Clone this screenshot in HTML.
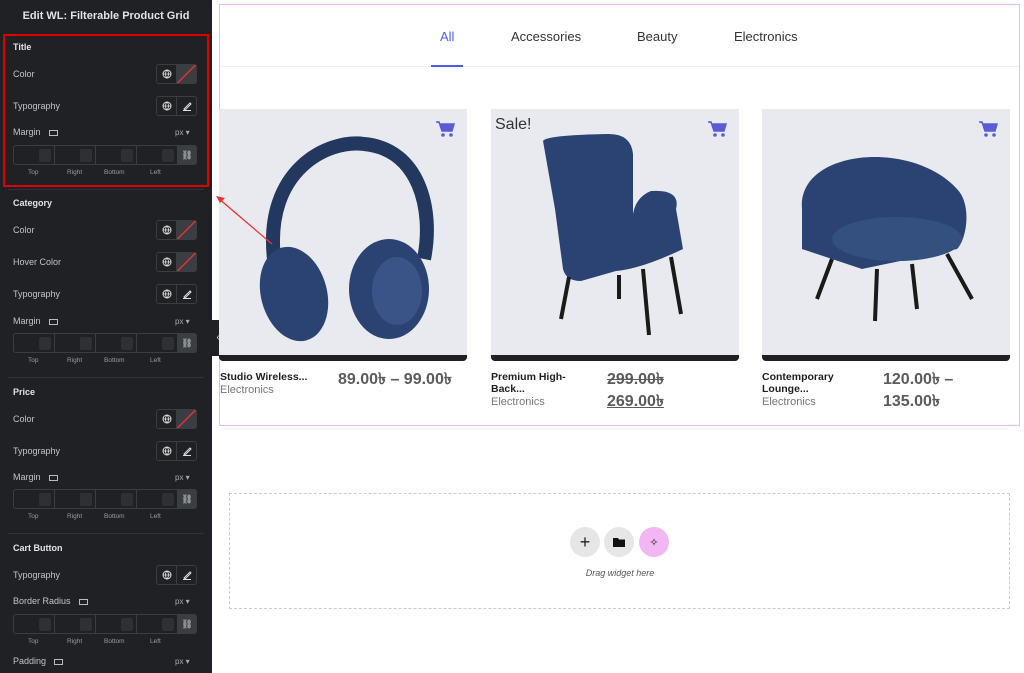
<!DOCTYPE html>
<html><head><meta charset="utf-8"><style>
*{box-sizing:border-box;margin:0;padding:0}
body{width:1024px;height:673px;overflow:hidden;background:#fff;font-family:"Liberation Sans",sans-serif;position:relative}
#sb{position:absolute;left:0;top:0;width:212px;height:673px;background:#1f2124;color:#c7c9cc;font-size:9px}
.a{position:absolute}
.h{font-weight:bold;color:#e2e3e5;font-size:9px}
.l{color:#c2c4c7;font-size:9px}
.bg{position:absolute;left:156px;width:41px;height:20px;border:1px solid #3a3d42;border-radius:3px;display:flex}
.bg div{flex:1;display:flex;align-items:center;justify-content:center}
.bg div+div{border-left:1px solid #3a3d42}
.red{background:#3a3d42;background-image:linear-gradient(135deg,transparent 46%,#d33 48%,#d33 52%,transparent 54%)}
.px{position:absolute;left:175px;font-size:8px;color:#aaa}
.inp{position:absolute;left:13px;width:184px;height:20px;border:1px solid #3a3d42;border-radius:3px;display:flex}
.inp .c{width:41px;border-right:1px solid #3a3d42;position:relative}
.inp .c:after{content:"";position:absolute;right:3px;top:3px;width:12px;height:13px;background:#2e3034;border-radius:2px}
.inp .k{flex:1;background:#3a3d42;display:flex;align-items:center;justify-content:center;color:#ddd;font-size:9px}
.lb{position:absolute;font-size:6.5px;color:#9a9ca0}
.div{position:absolute;left:8px;width:196px;height:1px;background:#313336}
.mon{display:inline-block;width:9px;height:6px;border:1.5px solid #bbb;margin-left:8px;vertical-align:middle;position:relative}
.tab{position:absolute;top:29px;font-size:13px;color:#333}
.card{position:absolute;top:109px;width:248px;height:252px}
.img{position:absolute;left:0;top:0;width:248px;height:248px;background:#e8eaef}
.bar{position:absolute;left:0;top:246px;width:248px;height:6px;background:#1f2024;border-radius:0 0 4px 4px}
.t{position:absolute;font-size:10.5px;font-weight:bold;color:#1f1f1f;line-height:12px}
.cat{position:absolute;font-size:11px;color:#777}
.pr{position:absolute;font-size:16px;font-weight:bold;color:#5a5a5f;line-height:22px}
.cart{position:absolute;right:12px;top:11px}
.circ{position:absolute;top:527px;width:30px;height:30px;border-radius:50%;background:#e6e6e6;display:flex;align-items:center;justify-content:center}
</style></head><body>
<div id="sb">
<div class="a h" style="left:0;width:212px;text-align:center;top:10px;font-size:11px">Edit WL: Filterable Product Grid</div>
<div class="a" style="left:3px;top:34px;width:206px;height:153px;border:2px solid #d00"></div>

<div class="a h" style="left:13px;top:42px">Title</div>
<div class="a l" style="left:13px;top:69px">Color</div><div class="bg" style="top:64px"><div><svg width="10" height="10" viewBox="0 0 10 10"><circle cx="5" cy="5" r="4" fill="none" stroke="#ddd"/><path d="M1 5h8M5 1c-2 2-2 6 0 8M5 1c2 2 2 6 0 8" stroke="#ddd" fill="none" stroke-width=".8"/></svg></div><div class="red"></div></div>
<div class="a l" style="left:13px;top:101px">Typography</div><div class="bg" style="top:96px"><div><svg width="10" height="10" viewBox="0 0 10 10"><circle cx="5" cy="5" r="4" fill="none" stroke="#ddd"/><path d="M1 5h8M5 1c-2 2-2 6 0 8M5 1c2 2 2 6 0 8" stroke="#ddd" fill="none" stroke-width=".8"/></svg></div><div><svg width="10" height="10"><path d="M2 8l6-6 1 1-6 6zM1 9.5h8" stroke="#ddd" fill="none"/></svg></div></div>
<div class="a l" style="left:13px;top:127px">Margin<span class="mon"></span></div><div class="px" style="top:128px">px ▾</div>
<div class="inp" style="top:145px"><div class="c"></div><div class="c"></div><div class="c"></div><div class="c"></div><div class="k">⛓</div></div>
<div class="lb" style="left:28px;top:169px">Top</div><div class="lb" style="left:67px;top:169px">Right</div><div class="lb" style="left:104px;top:169px">Bottom</div><div class="lb" style="left:150px;top:169px">Left</div>
<div class="div" style="top:189px"></div>

<div class="a h" style="left:13px;top:198px">Category</div>
<div class="a l" style="left:13px;top:225px">Color</div><div class="bg" style="top:220px"><div><svg width="10" height="10" viewBox="0 0 10 10"><circle cx="5" cy="5" r="4" fill="none" stroke="#ddd"/><path d="M1 5h8M5 1c-2 2-2 6 0 8M5 1c2 2 2 6 0 8" stroke="#ddd" fill="none" stroke-width=".8"/></svg></div><div class="red"></div></div>
<div class="a l" style="left:13px;top:257px">Hover Color</div><div class="bg" style="top:252px"><div><svg width="10" height="10" viewBox="0 0 10 10"><circle cx="5" cy="5" r="4" fill="none" stroke="#ddd"/><path d="M1 5h8M5 1c-2 2-2 6 0 8M5 1c2 2 2 6 0 8" stroke="#ddd" fill="none" stroke-width=".8"/></svg></div><div class="red"></div></div>
<div class="a l" style="left:13px;top:289px">Typography</div><div class="bg" style="top:284px"><div><svg width="10" height="10" viewBox="0 0 10 10"><circle cx="5" cy="5" r="4" fill="none" stroke="#ddd"/><path d="M1 5h8M5 1c-2 2-2 6 0 8M5 1c2 2 2 6 0 8" stroke="#ddd" fill="none" stroke-width=".8"/></svg></div><div><svg width="10" height="10"><path d="M2 8l6-6 1 1-6 6zM1 9.5h8" stroke="#ddd" fill="none"/></svg></div></div>
<div class="a l" style="left:13px;top:316px">Margin<span class="mon"></span></div><div class="px" style="top:317px">px ▾</div>
<div class="inp" style="top:333px"><div class="c"></div><div class="c"></div><div class="c"></div><div class="c"></div><div class="k">⛓</div></div>
<div class="lb" style="left:28px;top:357px">Top</div><div class="lb" style="left:67px;top:357px">Right</div><div class="lb" style="left:104px;top:357px">Bottom</div><div class="lb" style="left:150px;top:357px">Left</div>
<div class="div" style="top:377px"></div>

<div class="a h" style="left:13px;top:387px">Price</div>
<div class="a l" style="left:13px;top:414px">Color</div><div class="bg" style="top:409px"><div><svg width="10" height="10" viewBox="0 0 10 10"><circle cx="5" cy="5" r="4" fill="none" stroke="#ddd"/><path d="M1 5h8M5 1c-2 2-2 6 0 8M5 1c2 2 2 6 0 8" stroke="#ddd" fill="none" stroke-width=".8"/></svg></div><div class="red"></div></div>
<div class="a l" style="left:13px;top:446px">Typography</div><div class="bg" style="top:441px"><div><svg width="10" height="10" viewBox="0 0 10 10"><circle cx="5" cy="5" r="4" fill="none" stroke="#ddd"/><path d="M1 5h8M5 1c-2 2-2 6 0 8M5 1c2 2 2 6 0 8" stroke="#ddd" fill="none" stroke-width=".8"/></svg></div><div><svg width="10" height="10"><path d="M2 8l6-6 1 1-6 6zM1 9.5h8" stroke="#ddd" fill="none"/></svg></div></div>
<div class="a l" style="left:13px;top:472px">Margin<span class="mon"></span></div><div class="px" style="top:473px">px ▾</div>
<div class="inp" style="top:489px"><div class="c"></div><div class="c"></div><div class="c"></div><div class="c"></div><div class="k">⛓</div></div>
<div class="lb" style="left:28px;top:513px">Top</div><div class="lb" style="left:67px;top:513px">Right</div><div class="lb" style="left:104px;top:513px">Bottom</div><div class="lb" style="left:150px;top:513px">Left</div>
<div class="div" style="top:533px"></div>

<div class="a h" style="left:13px;top:543px">Cart Button</div>
<div class="a l" style="left:13px;top:570px">Typography</div><div class="bg" style="top:565px"><div><svg width="10" height="10" viewBox="0 0 10 10"><circle cx="5" cy="5" r="4" fill="none" stroke="#ddd"/><path d="M1 5h8M5 1c-2 2-2 6 0 8M5 1c2 2 2 6 0 8" stroke="#ddd" fill="none" stroke-width=".8"/></svg></div><div><svg width="10" height="10"><path d="M2 8l6-6 1 1-6 6zM1 9.5h8" stroke="#ddd" fill="none"/></svg></div></div>
<div class="a l" style="left:13px;top:596px">Border Radius<span class="mon"></span></div><div class="px" style="top:597px">px ▾</div>
<div class="inp" style="top:614px"><div class="c"></div><div class="c"></div><div class="c"></div><div class="c"></div><div class="k">⛓</div></div>
<div class="lb" style="left:28px;top:638px">Top</div><div class="lb" style="left:67px;top:638px">Right</div><div class="lb" style="left:104px;top:638px">Bottom</div><div class="lb" style="left:150px;top:638px">Left</div>
<div class="a l" style="left:13px;top:656px">Padding<span class="mon"></span></div><div class="px" style="top:657px">px ▾</div>
</div>
<div class="a" style="left:212px;top:320px;width:12px;height:36px;background:#1f2124;border-radius:0 3px 3px 0;color:#ddd;font-size:10px;line-height:36px;text-align:center">‹</div>

<div class="a" style="left:219px;top:4px;width:801px;height:422px;border:1px solid #f0b8f0"></div>
<div class="a" style="left:220px;top:66px;width:799px;height:1px;background:#eee"></div>
<div class="tab" style="left:440px;color:#4a5ee8">All</div>
<div class="a" style="left:431px;top:65px;width:32px;height:2px;background:#4a5ee8"></div>
<div class="tab" style="left:511px">Accessories</div>
<div class="tab" style="left:637px">Beauty</div>
<div class="tab" style="left:734px">Electronics</div>

<div class="card" style="left:219px"><div class="img">
<svg width="248" height="248" viewBox="0 0 248 248"><path d="M55 150C45 60 110 30 145 35C200 40 215 100 205 150" stroke="#22385f" stroke-width="14" fill="none"/><ellipse cx="75" cy="185" rx="33" ry="48" fill="#2b4372" transform="rotate(-15 75 185)"/><ellipse cx="170" cy="180" rx="40" ry="50" fill="#2b4372"/><ellipse cx="178" cy="182" rx="25" ry="34" fill="#3a5488"/></svg>
<svg class="cart" width="20" height="18" viewBox="0 0 20 18"><path d="M1 2h3l3 9h10l2-7H5" fill="#5b5bd6" stroke="#5b5bd6" stroke-width="1.5"/><circle cx="8" cy="15" r="1.8" fill="#5b5bd6"/><circle cx="16" cy="15" r="1.8" fill="#5b5bd6"/></svg>
</div><div class="bar"></div></div>

<div class="card" style="left:491px"><div class="img">
<div class="a" style="left:4px;top:7px;font-size:16px;color:#333">Sale!</div>
<svg width="248" height="248" viewBox="0 0 248 248"><path d="M52 32Q55 26 118 25Q140 25 142 45L142 105Q145 88 160 82Q190 80 185 100L192 140Q150 160 125 162L90 172Q75 172 72 160L64 100Z" fill="#2b4372"/><path d="M78 168L70 210M152 160L158 226M180 148L190 205M128 166L128 190" stroke="#1a1a1a" stroke-width="4"/></svg>
<svg class="cart" width="20" height="18" viewBox="0 0 20 18"><path d="M1 2h3l3 9h10l2-7H5" fill="#5b5bd6" stroke="#5b5bd6" stroke-width="1.5"/><circle cx="8" cy="15" r="1.8" fill="#5b5bd6"/><circle cx="16" cy="15" r="1.8" fill="#5b5bd6"/></svg>
</div><div class="bar"></div></div>

<div class="card" style="left:762px"><div class="img">
<svg width="248" height="248" viewBox="0 0 248 248"><path d="M40 100C35 40 150 30 195 80C210 95 205 130 195 140L100 160L40 140Z" fill="#2b4372"/><ellipse cx="135" cy="130" rx="65" ry="22" fill="#33507f"/><path d="M70 150L55 190M185 145L210 190M115 160L113 212M150 155L155 200" stroke="#1a1a1a" stroke-width="4"/></svg>
<svg class="cart" width="20" height="18" viewBox="0 0 20 18"><path d="M1 2h3l3 9h10l2-7H5" fill="#5b5bd6" stroke="#5b5bd6" stroke-width="1.5"/><circle cx="8" cy="15" r="1.8" fill="#5b5bd6"/><circle cx="16" cy="15" r="1.8" fill="#5b5bd6"/></svg>
</div><div class="bar"></div></div>

<svg class="a" style="left:212px;top:190px;z-index:5" width="80" height="60"><path d="M60 54L6 8" stroke="#e33" stroke-width="1.3"/><path d="M4 6l9 2-5 5z" fill="#e33"/></svg>

<div class="t" style="left:220px;top:371px">Studio Wireless...</div>
<div class="cat" style="left:220px;top:384px">Electronics</div>
<div class="pr" style="left:338px;top:369px">89.00৳ – 99.00৳</div>

<div class="t" style="left:491px;top:371px">Premium High-<br>Back...</div>
<div class="cat" style="left:491px;top:396px">Electronics</div>
<div class="pr" style="left:607px;top:369px;text-decoration:line-through">299.00৳</div>
<div class="pr" style="left:607px;top:391px;text-decoration:underline">269.00৳</div>

<div class="t" style="left:762px;top:371px">Contemporary<br>Lounge...</div>
<div class="cat" style="left:762px;top:396px">Electronics</div>
<div class="pr" style="left:883px;top:369px">120.00৳ –<br>135.00৳</div>

<div class="a" style="left:229px;top:493px;width:781px;height:116px;border:1.5px dashed #ccc"></div>
<div class="circ" style="left:570px;font-size:18px;color:#222">+</div>
<div class="circ" style="left:604px"><svg width="12" height="10"><path d="M0 1h5l1 1.5h6V10H0z" fill="#111"/></svg></div>
<div class="circ" style="left:639px;background:#f2b6f2;font-size:11px;color:#222">✧</div>
<div class="a" style="left:560px;top:568px;width:120px;text-align:center;font-size:9px;font-style:italic;color:#555">Drag widget here</div>
</body></html>
